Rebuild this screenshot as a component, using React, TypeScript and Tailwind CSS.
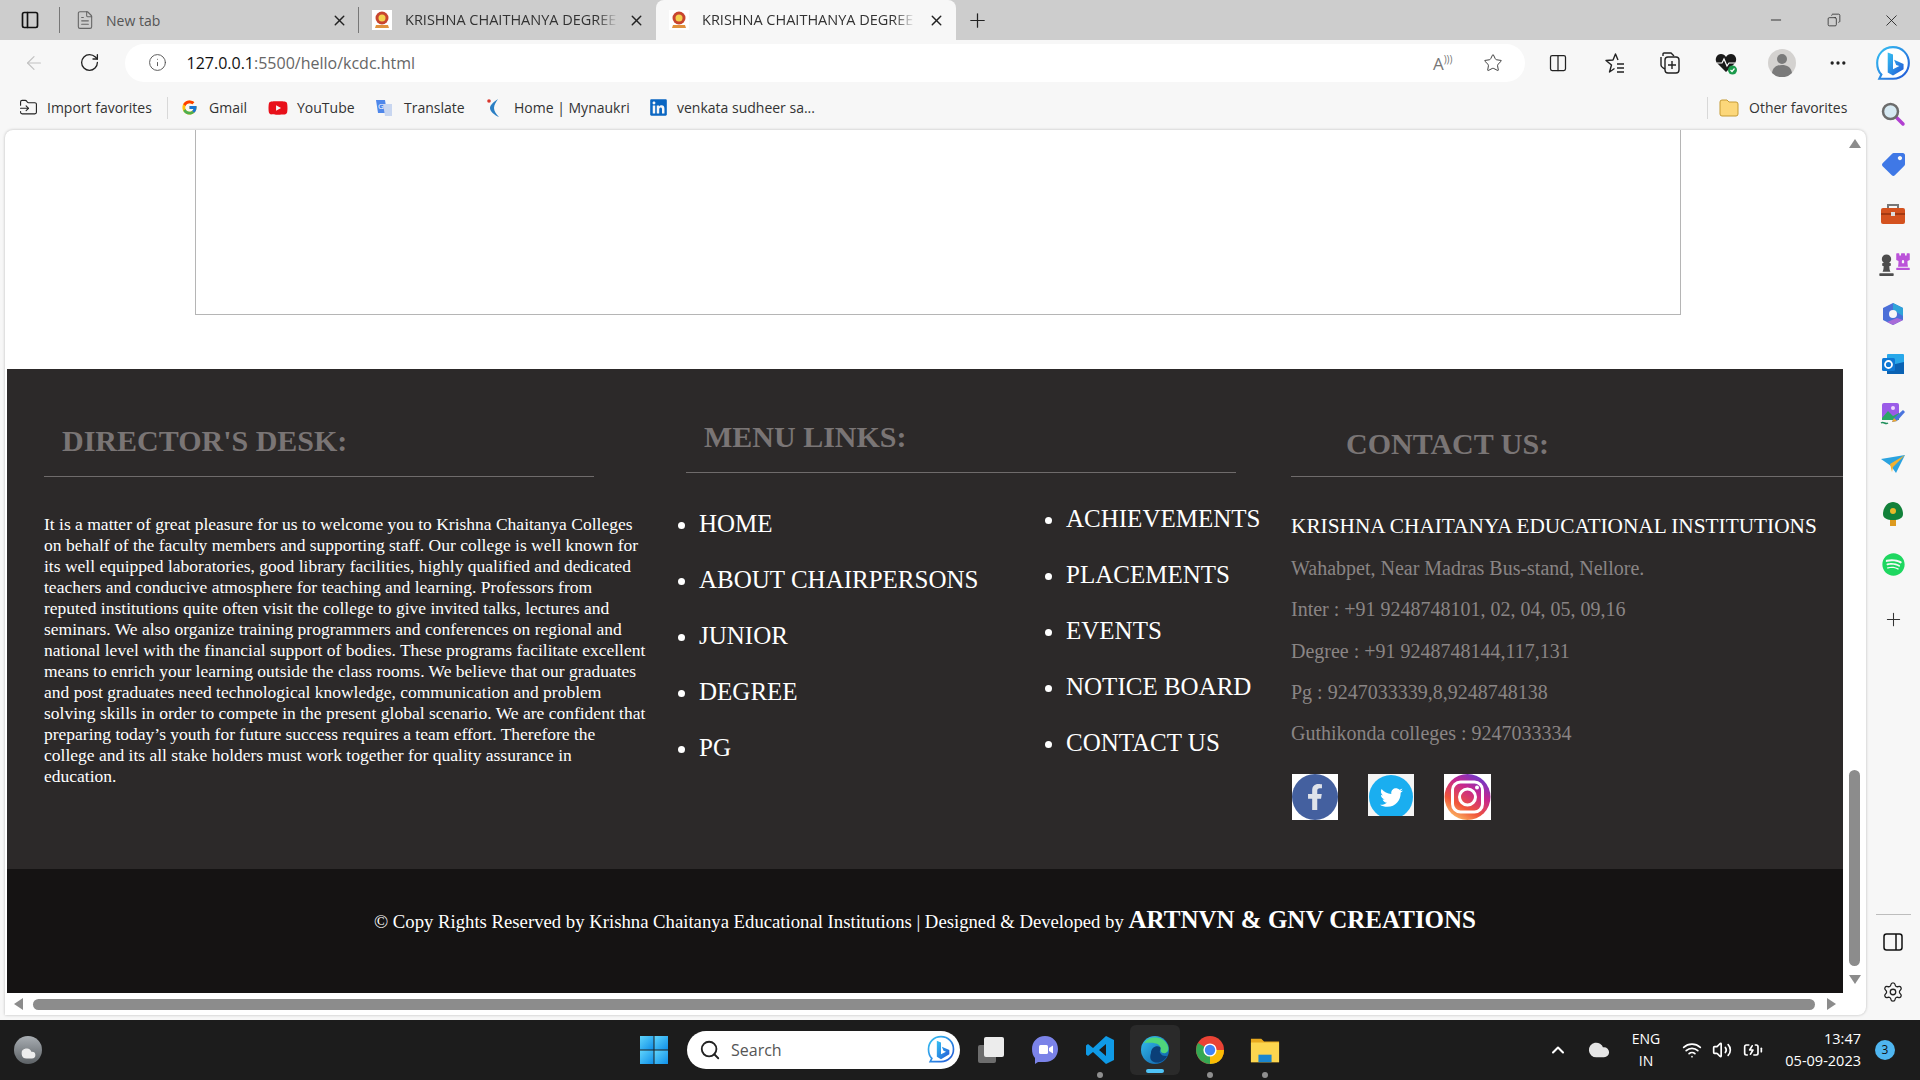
import React from 'react'
import {
  ArrowLeft, RotateCw, Info, Star, Plus, X, Minus, Copy, Columns2, Ellipsis, Settings,
  ChevronUp, Search, Wifi, Volume2, BatteryCharging, PanelLeft, FileText, Cloud, FolderInput,
} from 'lucide-react'
import { FaFacebookF, FaTwitter, FaYoutube, FaLinkedin, FaSpotify, FaChessPawn, FaChessRook, FaTag } from 'react-icons/fa'
import { FcGoogle } from 'react-icons/fc'

const Favicon = () => (
  <svg width="20" height="20" viewBox="0 0 20 20" className="shrink-0">
    <rect width="20" height="20" fill="#fff" />
    <circle cx="10" cy="8" r="6.5" fill="#c8452f" />
    <circle cx="10" cy="8" r="3.5" fill="#f4d14f" />
    <path d="M4 15h12l1 3H3z" fill="#e0913c" />
  </svg>
)

const Bing = ({ size = 36 }: { size?: number }) => (
  <svg width={size} height={size} viewBox="0 0 36 36">
    <defs>
      <linearGradient id="bingG" x1="0" y1="0" x2="1" y2="1">
        <stop offset="0" stopColor="#36c2f2" />
        <stop offset="1" stopColor="#2257d6" />
      </linearGradient>
    </defs>
    <path d="M18 2c9 0 15 7 15 15s-6 15-15 15H5l2-4C4 25 3 21 3 17 3 9 9 2 18 2z" fill="#fff" stroke="url(#bingG)" strokeWidth="2" />
    <path d="M13 7l5 2v14l6-3-3-1-2-5 9 4v5l-10 6-5-3z" fill="url(#bingG)" />
  </svg>
)

const Windows = () => (
  <svg width="30" height="30" viewBox="0 0 30 30">
    <defs>
      <linearGradient id="winG" x1="0" y1="0" x2="1" y2="1">
        <stop offset="0" stopColor="#5fd4fb" />
        <stop offset="1" stopColor="#0f8fe8" />
      </linearGradient>
    </defs>
    <rect x="1" y="1" width="13.5" height="13.5" fill="url(#winG)" />
    <rect x="15.5" y="1" width="13.5" height="13.5" fill="url(#winG)" />
    <rect x="1" y="15.5" width="13.5" height="13.5" fill="url(#winG)" />
    <rect x="15.5" y="15.5" width="13.5" height="13.5" fill="url(#winG)" />
  </svg>
)

const Chrome = () => (
  <svg width="30" height="30" viewBox="0 0 30 30">
    <circle cx="15" cy="15" r="14" fill="#ea4335" />
    <path d="M15 15L27.1 22A14 14 0 0 1 8 27.1z" fill="#34a853" />
    <path d="M15 15h14a14 14 0 0 1-8 13L15 29z" fill="#fbbc04" />
    <path d="M15 15L3 8a14 14 0 0 0 5 19.1z" fill="#34a853" />
    <circle cx="15" cy="15" r="6.6" fill="#fff" />
    <circle cx="15" cy="15" r="5.2" fill="#4285f4" />
  </svg>
)

const Edge = () => (
  <svg width="30" height="30" viewBox="0 0 30 30">
    <defs>
      <linearGradient id="edgeG" x1="0" y1="0" x2="1" y2="1">
        <stop offset="0" stopColor="#35c1f1" />
        <stop offset="1" stopColor="#0c59a4" />
      </linearGradient>
    </defs>
    <circle cx="15" cy="15" r="14" fill="url(#edgeG)" />
    <path d="M4 8C8 1 22 0 27 9c3 5 1 10-4 9-4-1-1-5-4-8-4-3-11-2-15-2z" fill="#4fd67b" />
    <path d="M11 18c0-5 5-8 9-6 2 2-2 4 1 7 1 2 4 2 6 2-3 6-11 9-16 4-1-2-1-4 0-7z" fill="#0b3f78" />
  </svg>
)

const VsCode = () => (
  <svg width="30" height="30" viewBox="0 0 30 30">
    <path d="M21 1l8 4v20l-8 4L8 17l-5 4-2-1.500V10.500L3 9l5 4zM21 9l-7 6 7 6z" fill="#0f9ae6" fillRule="evenodd" />
  </svg>
)

const Explorer = () => (
  <svg width="32" height="30" viewBox="0 0 32 30">
    <path d="M1 3h11l3 3h16v22H1z" fill="#e8a91e" />
    <rect x="1" y="7" width="30" height="21" fill="#fcd64f" />
    <rect x="9" y="20" width="14" height="8" fill="#1a86cf" />
  </svg>
)

const Teams = () => (
  <svg width="30" height="30" viewBox="0 0 30 30">
    <path d="M15 1c8 0 13 6 13 13s-5 13-13 13H8l-3 2v-6C3 21 2 18 2 14 2 7 7 1 15 1z" fill="#7b83e8" />
    <rect x="9" y="10" width="9" height="9" rx="1.500" fill="#fff" />
    <path d="M19 13l4-2.500v8L19 16z" fill="#fff" />
  </svg>
)

const WindowsFiles = () => (
  <svg width="30" height="30" viewBox="0 0 30 30">
    <rect x="2" y="10" width="18" height="18" rx="2" fill="#6d6d6d" />
    <rect x="8" y="2" width="20" height="20" rx="2" fill="#ececec" />
  </svg>
)

const Tab = ({ title, active, width }: { title: string; active?: boolean; width: string }) => (
  <div className={`${width} ${active ? 'bg-[#f7f7f7] rounded-t-lg' : ''} h-[40px] flex items-center pl-[13px] pr-[11px] shrink-0`}>
    <Favicon />
    <span className="ml-[13px] w-[213px] text-[14.500px] text-[#333] whitespace-nowrap [mask-image:linear-gradient(to_right,black_90%,transparent)]">{title}</span>
    <X size={17} className="ml-auto text-[#222]" />
  </div>
)

const Bookmark = ({ icon, label, width, gap = 'gap-[10px]' }: { icon: React.ReactNode; label: string; width: string; gap?: string }) => (
  <div className={`${width} ${gap} flex items-center shrink-0 text-[14px] text-[#333] whitespace-nowrap`}>
    <span className="w-[20px] h-[20px] flex items-center justify-center shrink-0">{icon}</span>
    {label}
  </div>
)

const ToolButton = ({ children }: { children: React.ReactNode }) => (
  <div className="w-[56px] h-[45px] flex items-center justify-center shrink-0 text-[#222]">{children}</div>
)

const sideIcons: React.ReactNode[] = [
  <svg width="26" height="26" viewBox="0 0 26 26"><path d="M15 15l8 8" stroke="#b13fd1" strokeWidth="3.500" strokeLinecap="round" /><circle cx="10.500" cy="10.500" r="7.500" fill="#d6e9f2" stroke="#6c6c6c" strokeWidth="2.500" /></svg>,
  <FaTag size={23} className="text-[#3f78e6] -scale-x-100" />,
  <svg width="26" height="24" viewBox="0 0 26 24"><path d="M8 6V3h10v3" fill="none" stroke="#777" strokeWidth="2" /><rect x="1" y="6" width="24" height="16" rx="2" fill="#d4521f" /><rect x="1" y="11" width="24" height="2" fill="#a53a12" /><rect x="11" y="10" width="4" height="4" fill="#ddd" /></svg>,
  <span className="flex items-end"><FaChessPawn size={23} className="text-[#4d4d4d]" /><FaChessRook size={18} className="text-[#bb52d9] -ml-[4px] mb-[6px]" /></span>,
  <svg width="24" height="24" viewBox="0 0 24 24"><path d="M12 1l10 5v12l-10 5L2 18V6z" fill="#4b6fd8" /><path d="M12 1l10 5v8L12 8z" fill="#2fa4d9" /><path d="M22 18l-10 5-6-3 10-4z" fill="#a86bd8" /><circle cx="12" cy="12" r="4" fill="#f7f7f7" /></svg>,
  <svg width="24" height="24" viewBox="0 0 24 24"><rect x="6" y="2" width="17" height="20" rx="1" fill="#28a8ea" /><path d="M23 10v12H6V14z" fill="#0a62b3" /><rect x="1" y="6" width="13" height="13" rx="1.500" fill="#0f78d4" /><circle cx="7.500" cy="12.500" r="3.500" fill="none" stroke="#fff" strokeWidth="1.800" /></svg>,
  <svg width="26" height="24" viewBox="0 0 26 24"><rect x="2" y="1" width="17" height="17" rx="2" fill="#9a5be8" /><path d="M2 16l6-7 5 5 6-3v7H2z" fill="#2aa866" /><circle cx="13" cy="6" r="2" fill="#eed6ff" /><path d="M12 20l2-4 9-8 2 2-8 9z" fill="#4a74dd" /><path d="M12 20l2-4 3 3z" fill="#efa92c" /><path d="M1 21c3-2 4 2 7 0" stroke="#1f8f5b" strokeWidth="1.500" fill="none" /></svg>,
  <svg width="26" height="20" viewBox="0 0 26 20"><path d="M1 5l24-4-9 18-5-7z" fill="#2ba3df" /><path d="M10 10L25 1 13 13l-1 5z" fill="#f3b12f" /></svg>,
  <svg width="22" height="26" viewBox="0 0 22 26"><rect x="8" y="17" width="6" height="8" fill="#dd9a1f" /><path d="M11 1c6 0 10 6 10 12 0 4-4 6-10 6S1 17 1 13C1 7 5 1 11 1z" fill="#12813a" /><circle cx="11" cy="10" r="3" fill="#e9b92a" /></svg>,
  <FaSpotify size={23} className="text-[#1ed760]" />,
]

const footerLinksLeft = ['HOME', 'ABOUT CHAIRPERSONS', 'JUNIOR', 'DEGREE', 'PG']
const footerLinksRight = ['ACHIEVEMENTS', 'PLACEMENTS', 'EVENTS', 'NOTICE BOARD', 'CONTACT US']
const contactLines = [
  'Wahabpet, Near Madras Bus-stand, Nellore.',
  'Inter : +91 9248748101, 02, 04, 05, 09,16',
  'Degree : +91 9248748144,117,131',
  'Pg : 9247033339,8,9248748138',
  'Guthikonda colleges : 9247033334',
]

const Triangle = ({ dir }: { dir: 'up' | 'down' | 'left' | 'right' }) => {
  const points = { up: '0,9 12,9 6,0', down: '0,0 12,0 6,9', left: '9,0 9,12 0,6', right: '0,0 0,12 9,6' }[dir]
  const box = dir === 'up' || dir === 'down' ? { w: 12, h: 9 } : { w: 9, h: 12 }
  return (
    <svg width={box.w} height={box.h} viewBox={`0 0 ${box.w} ${box.h}`} className="shrink-0">
      <polygon points={points} fill="#8c8c8c" />
    </svg>
  )
}

export default function App() {
  return (
    <div className="w-[1920px] h-[1080px] overflow-hidden flex flex-col bg-[#f7f7f7] font-['Open_Sans',sans-serif]">
      {/* tab strip */}
      <div className="h-[40px] bg-[#cdcdcd] flex items-center shrink-0">
        <div className="w-[59px] flex justify-center"><PanelLeft size={20} strokeWidth={2} className="text-[#111]" /></div>
        <div className="w-px h-[26px] bg-[#777]" />
        <div className="w-[298px] flex items-center pl-[15px] pr-[10px] shrink-0">
          <FileText size={20} strokeWidth={1.3} className="text-[#666]" />
          <span className="ml-[11px] text-[14px] text-[#555]">New tab</span>
          <X size={17} className="ml-auto text-[#222]" />
        </div>
        <div className="w-px h-[26px] bg-[#777]" />
        <Tab title="KRISHNA CHAITHANYA DEGREE" width="w-[297px]" />
        <Tab title="KRISHNA CHAITHANYA DEGREE" width="w-[300px]" active />
        <div className="w-[42px] flex justify-center"><Plus size={23} strokeWidth={1.3} className="text-[#222]" /></div>
        <div className="flex-1" />
        <div className="w-[58px] flex justify-center"><Minus size={16} strokeWidth={1.3} className="text-[#222]" /></div>
        <div className="w-[58px] flex justify-center"><Copy size={14} strokeWidth={1.3} className="text-[#222] -scale-x-100" /></div>
        <div className="w-[57px] flex justify-center"><X size={19} strokeWidth={1.1} className="text-[#222]" /></div>
      </div>

      <div className="h-[980px] flex shrink-0">
        <div className="w-[1866px] shrink-0 flex flex-col">
          {/* address bar */}
          <div className="h-[45px] flex items-center shrink-0">
            <div className="w-[6px]" />
            <ToolButton><ArrowLeft size={22} strokeWidth={1.3} className="text-[#c2c2c2]" /></ToolButton>
            <ToolButton><RotateCw size={21} strokeWidth={1.5} /></ToolButton>
            <div className="ml-[7px] w-[1400px] h-[38px] rounded-full bg-white flex items-center pl-[23px] pr-[22px] shrink-0">
              <Info size={19} strokeWidth={1.2} className="text-[#555]" />
              <span className="ml-[20px] text-[16px] text-[#111]">127.0.0.1<span className="text-[#666]">:5500/hello/kcdc.html</span></span>
              <span className="ml-auto text-[17px] text-[#777] leading-none">A<span className="text-[10px] align-super">)))</span></span>
              <Star size={20} strokeWidth={1.2} className="ml-[30px] text-[#444]" />
            </div>
            <div className="w-[6px]" />
            <ToolButton><Columns2 size={20} strokeWidth={1.5} /></ToolButton>
            <ToolButton>
              <svg width="24" height="24" viewBox="0 0 24 24" fill="none" stroke="#222" strokeWidth="1.400" strokeLinejoin="round"><path d="M16 9l-2.500-6-2.500 6-7 .5 5.500 4.500-2 7 5-3.500" /><path d="M15 13h7M15 17h7M15 21h7" /></svg>
            </ToolButton>
            <ToolButton>
              <svg width="22" height="24" viewBox="0 0 22 24" fill="none" stroke="#222" strokeWidth="1.400"><path d="M4 5V3a1 1 0 0 1 1-1h7l3 3" /><rect x="6" y="6" width="14" height="16" rx="3" /><path d="M13 10v8M9 14h8" /><path d="M6 18c-2-1-4-2-4-4V6" /></svg>
            </ToolButton>
            <ToolButton>
              <svg width="24" height="24" viewBox="0 0 24 24"><path d="M12 21L3 12C0 8 3 3 7 3c2 0 4 1 5 3 1-2 3-3 5-3 4 0 7 5 4 9z" fill="#1a1a1a" /><path d="M3 12h5l2-4 3 7 2-3h6" stroke="#fff" strokeWidth="1.200" fill="none" /><circle cx="18.500" cy="19" r="4.500" fill="#1a9a4b" /><path d="M16.500 19l1.500 1.500 2.500-3" stroke="#fff" strokeWidth="1.200" fill="none" /></svg>
            </ToolButton>
            <ToolButton>
              <svg width="28" height="28" viewBox="0 0 28 28"><circle cx="14" cy="14" r="14" fill="#d4d2d0" /><circle cx="14" cy="10" r="5" fill="#7a7a7a" /><path d="M4 24c1-6 5-8 10-8s9 2 10 8a14 14 0 0 1-20 0z" fill="#7a7a7a" /></svg>
            </ToolButton>
            <ToolButton><Ellipsis size={20} /></ToolButton>
          </div>

          {/* bookmarks bar */}
          <div className="h-[45px] flex items-center shrink-0 pl-[18px] pr-[15px]">
            <Bookmark icon={<FolderInput size={19} strokeWidth={1.4} className="text-[#222]" />} label="Import favorites" width="w-[149px]" gap="gap-[9px]" />
            <div className="w-px h-[22px] bg-[#d8d8d8]" />
            <div className="w-[11px]" />
            <Bookmark icon={<FcGoogle size={17} />} label="Gmail" width="w-[89px]" />
            <Bookmark icon={<FaYoutube size={20} className="text-[#e8101a]" />} label="YouTube" width="w-[106px]" gap="gap-[9px]" />
            <Bookmark icon={<svg width="20" height="20" viewBox="0 0 20 20"><path d="M2 2h9l2 13H4z" fill="#4f87ea" /><path d="M9 6h9v12h-7z" fill="#c8d6f0" /><text x="4" y="11" fontSize="8" fill="#fff" fontFamily="Open Sans">G</text></svg>} label="Translate" width="w-[110px]" />
            <Bookmark icon={<svg width="20" height="22" viewBox="0 0 20 22"><path d="M14 2C8 6 6 9 6 11c0 3 4 7 9 9-3-3-5-6-5-9 0-3 2-6 4-9z" fill="#2b7fc4" /><circle cx="5" cy="4" r="1.800" fill="#d9362c" /></svg>} label="Home | Mynaukri" width="w-[164px]" />
            <Bookmark icon={<FaLinkedin size={19} className="text-[#0a66c2]" />} label="venkata sudheer sa..." width="w-[180px]" gap="gap-[9px]" />
            <div className="flex-1" />
            <div className="w-px h-[22px] bg-[#d8d8d8] mr-[11px]" />
            <Bookmark icon={<svg width="20" height="20" viewBox="0 0 20 20"><path d="M1 4a2 2 0 0 1 2-2h5l2 2h7a2 2 0 0 1 2 2v10a2 2 0 0 1-2 2H3a2 2 0 0 1-2-2z" fill="#fcd77a" stroke="#c59a33" /></svg>} label="Other favorites" width="w-[132px]" />
          </div>

          {/* page */}
          <div className="ml-[5px] w-[1861px] h-[885px] bg-white rounded-t-lg rounded-br-lg shadow-[0_0_3px_rgba(0,0,0,0.25)] flex flex-col overflow-hidden">
            <div className="flex h-[863px] shrink-0">
              <div className="ml-[2px] w-[1836px] shrink-0 font-['Liberation_Serif',serif]">
                <div className="h-[239px] pl-[188px] pr-[162px]">
                  <div className="h-[185px] border-x border-b border-[#b5b5b5]" />
                </div>

                <div className="h-[500px] bg-[#2c2929] flex pl-[37px]">
                  <div className="w-[642px] shrink-0 pt-[55px]">
                    <h2 className="pl-[18px] text-[30px] leading-[34px] font-bold text-[#7a7575] whitespace-nowrap">DIRECTOR'S DESK:</h2>
                    <div className="mt-[18px] w-[550px] h-px bg-[#6f6b6b]" />
                    <p className="mt-[37px] w-[603px] text-[17.500px] leading-[21px] text-white">
                      It is a matter of great pleasure for us to welcome you to Krishna Chaitanya Colleges on behalf of the faculty members and supporting staff. Our college is well known for its well equipped laboratories, good library facilities, highly qualified and dedicated teachers and conducive atmosphere for teaching and learning. Professors from reputed institutions quite often visit the college to give invited talks, lectures and seminars. We also organize training programmers and conferences on regional and national level with the financial support of bodies. These programs facilitate excellent means to enrich your learning outside the class rooms. We believe that our graduates and post graduates need technological knowledge, communication and problem solving skills in order to compete in the present global scenario. We are confident that preparing today’s youth for future success requires a team effort. Therefore the college and its all stake holders must work together for quality assurance in education.
                    </p>
                  </div>

                  <div className="w-[605px] shrink-0 pt-[51px]">
                    <h2 className="pl-[18px] text-[30px] leading-[34px] font-bold text-[#7a7575] whitespace-nowrap">MENU LINKS:</h2>
                    <div className="mt-[18px] w-[550px] h-px bg-[#6f6b6b]" />
                    <div className="flex items-start">
                      <ul className="mt-[23px] w-[380px] shrink-0 pl-[13px] list-disc text-[25px] leading-[56px] text-white whitespace-nowrap">
                        {footerLinksLeft.map(link => <li key={link}>{link}</li>)}
                      </ul>
                      <ul className="mt-[18px] list-disc text-[25px] leading-[56px] text-white whitespace-nowrap">
                        {footerLinksRight.map(link => <li key={link}>{link}</li>)}
                      </ul>
                    </div>
                  </div>

                  <div className="flex-1 pt-[58px]">
                    <h2 className="pl-[55px] text-[30px] leading-[34px] font-bold text-[#7a7575] whitespace-nowrap">CONTACT US:</h2>
                    <div className="mt-[15px] h-px bg-[#6f6b6b]" />
                    <div className="mt-[29px] mb-[1px] text-[21.300px] leading-[41px] text-white whitespace-nowrap">KRISHNA CHAITANYA EDUCATIONAL INSTITUTIONS</div>
                    {contactLines.map(line => (
                      <div key={line} className="text-[20px] leading-[41.300px] text-[#8a8585] whitespace-nowrap">{line}</div>
                    ))}
                    <div className="mt-[20px] ml-px flex items-start gap-[30px]">
                      <div className="w-[46px] h-[46px] bg-white flex items-center justify-center">
                        <div className="w-[46px] h-[46px] rounded-full bg-[#44609f] flex items-center justify-center"><FaFacebookF size={26} className="text-[#dfe3ea]" /></div>
                      </div>
                      <div className="w-[46px] h-[42px] bg-[#f4f4f4] overflow-hidden flex justify-center">
                        <div className="w-[44px] h-[44px] mt-[1px] rounded-full bg-[#1aaef0] flex items-center justify-center"><FaTwitter size={23} className="text-white" /></div>
                      </div>
                      <div className="w-[47px] h-[46px] bg-white">
                        <svg width="47" height="46" viewBox="0 0 47 46">
                          <defs>
                            <linearGradient id="instaG" x1="0.2" y1="1" x2="0.8" y2="0">
                              <stop offset="0" stopColor="#fdc468" />
                              <stop offset="0.3" stopColor="#f0563a" />
                              <stop offset="0.65" stopColor="#c6268f" />
                              <stop offset="1" stopColor="#5f3bd3" />
                            </linearGradient>
                          </defs>
                          <circle cx="23.500" cy="23" r="23" fill="url(#instaG)" />
                          <rect x="8.500" y="8" width="30" height="30" rx="8" fill="none" stroke="#fff" strokeWidth="3" />
                          <circle cx="23.500" cy="23" r="8" fill="none" stroke="#fff" strokeWidth="3" />
                          <circle cx="33" cy="13.500" r="2" fill="#fff" />
                        </svg>
                      </div>
                    </div>
                  </div>
                </div>

                <div className="h-[124px] bg-[#151313] pt-[37px] text-center whitespace-nowrap text-white text-[18.720px] leading-[28px]">
                  © Copy Rights Reserved by Krishna Chaitanya Educational Institutions | Designed &amp; Developed by <span className="text-[25px] font-bold">ARTNVN &amp; GNV CREATIONS</span>
                </div>
              </div>

              {/* vertical scrollbar */}
              <div className="w-[23px] flex flex-col items-center">
                <div className="mt-[9px]"><Triangle dir="up" /></div>
                <div className="mt-[622px] w-[11px] h-[196px] rounded-full bg-[#8c8c8c]" />
                <div className="mt-[9px]"><Triangle dir="down" /></div>
              </div>
            </div>

            {/* horizontal scrollbar */}
            <div className="h-[22px] flex items-center pl-[9px]">
              <Triangle dir="left" />
              <div className="ml-[10px] w-[1782px] h-[11px] rounded-full bg-[#8c8c8c]" />
              <div className="ml-[12px]"><Triangle dir="right" /></div>
            </div>
          </div>
        </div>

        {/* edge sidebar */}
        <div className="flex-1 flex flex-col items-center">
          <div className="h-[48px] flex items-center justify-center"><Bing size={38} /></div>
          <div className="h-px" />
          {sideIcons.map((icon, i) => (
            <div key={i} className="h-[50px] w-full flex items-center justify-center">{icon}</div>
          ))}
          <div className="h-[55px] w-full flex items-center justify-center pt-[5px]"><Plus size={21} strokeWidth={1.2} className="text-[#333]" /></div>
          <div className="mt-[270px] w-[35px] h-px bg-[#bdbdbd]" />
          <div className="mt-[2px] h-[50px] flex items-center justify-center">
            <svg width="20" height="18" viewBox="0 0 20 18" fill="none" stroke="#111" strokeWidth="1.500"><rect x="1" y="1" width="18" height="16" rx="2.500" /><path d="M13 1v16" /></svg>
          </div>
          <div className="h-[50px] flex items-center justify-center"><Settings size={22} strokeWidth={1.4} className="text-[#222]" /></div>
        </div>
      </div>

      {/* taskbar */}
      <div className="h-[60px] bg-[#1c1c1c] flex items-center shrink-0 text-white">
        <div className="ml-[14px] w-[28px] h-[28px] rounded-full bg-gradient-to-b from-[#a9aeb3] to-[#5d6266] flex items-center justify-center">
          <Cloud size={15} fill="#eee" className="text-[#eee] mt-[6px]" />
        </div>
        <div className="ml-[597px]"><Windows /></div>
        <div className="ml-[18px] w-[273px] h-[38px] rounded-full bg-white flex items-center pl-[12px] pr-[4px]">
          <Search size={22} strokeWidth={2} className="text-[#222]" />
          <span className="ml-[10px] text-[16px] text-[#555]">Search</span>
          <span className="ml-auto"><Bing size={30} /></span>
        </div>
        <div className="ml-[16px] w-[30px]"><WindowsFiles /></div>
        <div className="ml-[24px] w-[30px]"><Teams /></div>
        <div className="ml-[25px] w-[30px] relative flex justify-center">
          <VsCode />
          <span className="absolute -bottom-[13px] w-[6px] h-[6px] rounded-full bg-[#8f8f8f]" />
        </div>
        <div className="ml-[15px] w-[50px] h-[50px] rounded-md bg-[#2a2a2a] relative flex items-center justify-center">
          <Edge />
          <span className="absolute bottom-[2px] w-[18px] h-[4px] rounded-full bg-[#4fc3f7]" />
        </div>
        <div className="ml-[15px] w-[30px] relative flex justify-center">
          <Chrome />
          <span className="absolute -bottom-[13px] w-[6px] h-[6px] rounded-full bg-[#8f8f8f]" />
        </div>
        <div className="ml-[25px] w-[30px] relative flex justify-center">
          <Explorer />
          <span className="absolute -bottom-[13px] w-[6px] h-[6px] rounded-full bg-[#8f8f8f]" />
        </div>
        <div className="flex-1" />
        <ChevronUp size={20} strokeWidth={2.5} />
        <Cloud size={22} fill="#e5e5e5" className="ml-[20px] text-[#e5e5e5]" />
        <div className="ml-[11px] w-[50px] text-center text-[14px] leading-[22px]">ENG<br />IN</div>
        <Wifi size={20} className="ml-[11px]" />
        <Volume2 size={20} className="ml-[10px]" />
        <BatteryCharging size={20} className="ml-[11px]" />
        <div className="ml-[20px] w-[78px] text-right text-[14.500px] leading-[22px] whitespace-nowrap">13:47<br />05-09-2023</div>
        <div className="ml-[14px] mr-[25px] w-[20px] h-[20px] rounded-full bg-[#4fb6f0] text-[#111] text-[12px] flex items-center justify-center">3</div>
      </div>
    </div>
  )
}
